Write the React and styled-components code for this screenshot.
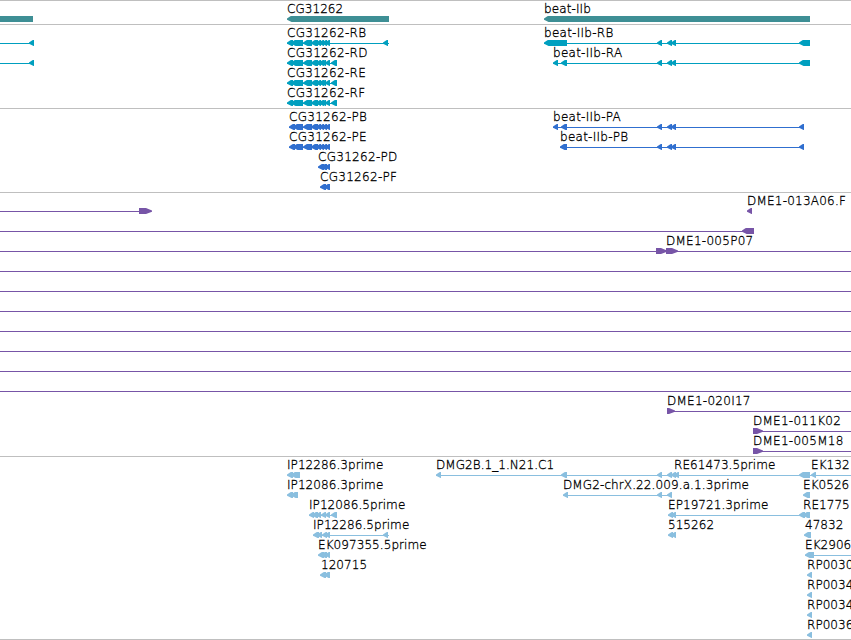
import styled, { createGlobalStyle } from "styled-components";

const GlobalStyle = createGlobalStyle`
  body {
    margin: 0;
    background: #fff;
    overflow: hidden;
  }
`;

const Browser = styled.main`
  width: 851px;
  height: 640px;
  overflow: hidden;
  border-bottom: 1px solid #bfbfbf;
  box-sizing: border-box;
`;

const Track = styled.section`
  padding: 1px 0 ${({ $last }) => ($last ? "1px" : "2px")};
  border-top: 1px solid #bfbfbf;
  color: ${({ $color }) => $color};
`;

const Row = styled.div`
  display: flex;
  flex-direction: column;
  height: 20px;
`;

const Labels = styled.div`
  position: relative;
  height: 14px;
`;

/* labels sit at the sequence position of their feature */
const Label = styled.span`
  position: absolute;
  left: ${({ $x }) => $x}px;
  top: 0;
  color: #000;
  font: 200 12px/14px "DejaVu Sans", sans-serif;
  letter-spacing: ${({ $spacing }) => $spacing}px;
  -webkit-text-stroke: 0.3px #000;
  white-space: nowrap;
`;

const Glyphs = styled.svg`
  display: block;
  width: 851px;
  height: 6px;
  fill: currentColor;
`;

const exonPoints = (start, end, dir) => {
  if (dir === ">") {
    return `${start},0 ${end - 6},0 ${end},2.4 ${end},3.8 ${end - 6},6 ${start},6`;
  }
  return `${end},0 ${start + 3.8},0 ${start},2.4 ${start},3.8 ${start + 4.6},6 ${end},6`;
};

// hyphenated names run a little wider than plain ones
const labelSpacing = (text) => {
  if (!text.includes("-")) return text.includes("prime") ? 0.07 : 0.05;
  return text.length > 8 ? 2.9 / text.length : 0.1;
};

const beatEnd = [[657, 662], [667, 672], [671, 676]];
const cgStart = [[287, 293], [291, 303], [303, 312]];
const cgMiddle = [[311, 318], [316, 321], [319, 324]];
const cgTail = [[322, 327], [325, 330]];
const rdExons = [...cgStart, ...cgMiddle, [321, 326], [325, 330], [331, 337]];
const pbExons = [[289, 295], [293, 303], [303, 312], ...cgMiddle, ...cgTail];
const pdExons = [[318, 324], [321, 327], [325, 330]];
const pfExons = [[320, 326], [324, 330]];

// row: labels [x, text], lines [start, end], exons [start, end, direction]
const tracks = [
  {
    name: "genes",
    color: "#3e8f95",
    rows: [
      {
        labels: [[287, "CG31262"], [544, "beat-IIb"]],
        exons: [[-10, 33], [287, 389], [544, 810]],
      },
    ],
  },
  {
    name: "transcripts",
    color: "#009fbf",
    rows: [
      {
        labels: [[287, "CG31262-RB"], [544, "beat-IIb-RB"]],
        lines: [[0, 34], [287, 389], [544, 810]],
        exons: [[29, 34], ...cgStart, ...cgMiddle, ...cgTail, [383, 388], [544, 567], ...beatEnd, [799, 810]],
      },
      {
        labels: [[287, "CG31262-RD"], [553, "beat-IIb-RA"]],
        lines: [[0, 34], [287, 337], [553, 810]],
        exons: [[29, 34], ...rdExons, [553, 558], [561, 567], ...beatEnd, [799, 810]],
      },
      { labels: [[287, "CG31262-RE"]], lines: [[287, 337]], exons: rdExons },
      { labels: [[287, "CG31262-RF"]], lines: [[287, 337]], exons: rdExons },
    ],
  },
  {
    name: "proteins",
    color: "#306fcf",
    rows: [
      {
        labels: [[289, "CG31262-PB"], [553, "beat-IIb-PA"]],
        lines: [[289, 330], [553, 804]],
        exons: [...pbExons, [553, 558], [561, 567], ...beatEnd, [799, 804]],
      },
      {
        labels: [[289, "CG31262-PE"], [560, "beat-IIb-PB"]],
        lines: [[289, 330], [560, 804]],
        exons: [...pbExons, [560, 567], ...beatEnd, [799, 804]],
      },
      { labels: [[318, "CG31262-PD"]], exons: pdExons },
      { labels: [[320, "CG31262-PF"]], exons: pfExons },
    ],
  },
  {
    name: "insertions",
    color: "#7755a7",
    rows: [
      {
        labels: [[747, "DME1-013A06.F"]],
        lines: [[0, 151]],
        exons: [[139, 152, ">"], [747, 752]],
      },
      { lines: [[0, 754]], exons: [[742, 754]] },
      {
        labels: [[666, "DME1-005P07"]],
        lines: [[0, 851]],
        exons: [[656, 667, ">"], [666, 678, ">"]],
      },
      ...Array.from({ length: 7 }, () => ({ lines: [[0, 851]] })),
      { labels: [[667, "DME1-020I17"]], lines: [[667, 851]], exons: [[667, 675, ">"]] },
      { labels: [[753, "DME1-011K02"]], lines: [[753, 851]], exons: [[753, 763, ">"]] },
      { labels: [[753, "DME1-005M18"]], lines: [[753, 851]], exons: [[753, 763, ">"]] },
    ],
  },
  {
    name: "ests",
    color: "#8abfdf",
    rows: [
      {
        labels: [[287, "IP12286.3prime"], [436, "DMG2B.1_1.N21.C1"], [674, "RE61473.5prime"], [811, "EK132"]],
        lines: [[436, 851]],
        exons: [[287, 293], [291, 300], [436, 441], [561, 567], ...beatEnd, [674, 679], [799, 810], [811, 816]],
      },
      {
        labels: [[287, "IP12086.3prime"], [563, "DMG2-chrX.22.009.a.1.3prime"], [803, "EK0526"]],
        lines: [[563, 672]],
        exons: [[287, 293], [291, 298], [563, 568], [657, 662], [667, 672], [803, 810]],
      },
      {
        labels: [[309, "IP12086.5prime"], [668, "EP19721.3prime"], [803, "RE1775"]],
        lines: [[309, 337], [668, 810]],
        exons: [[309, 314], [312, 318], [316, 321], [321, 326], [325, 330], [331, 337], [668, 673], [671, 676], [799, 805], [803, 810]],
      },
      {
        labels: [[313, "IP12286.5prime"], [668, "515262"], [805, "47832"]],
        lines: [[313, 389]],
        exons: [[313, 319], [317, 322], ...cgTail, [383, 388], [668, 673], [671, 676], [804, 811]],
      },
      {
        labels: [[318, "EK097355.5prime"], [805, "EK2906"]],
        lines: [[805, 851]],
        exons: [...pdExons, [805, 814]],
      },
      { labels: [[321, "120715"], [807, "RP0030"]], exons: [...pfExons, [807, 812]] },
      { labels: [[807, "RP0034"]], exons: [[807, 812]] },
      { labels: [[807, "RP0034"]], exons: [[807, 812]] },
      { labels: [[807, "RP0036"]], exons: [[807, 812]] },
    ],
  },
];

const FeatureRow = ({ labels = [], lines = [], exons = [] }) => (
  <Row>
    <Labels>
      {labels.map(([x, text]) => (
        <Label key={x} $x={x} $spacing={labelSpacing(text)}>
          {text}
        </Label>
      ))}
    </Labels>
    <Glyphs viewBox="0 0 851 6">
      {lines.map(([start, end]) => (
        <rect key={start} x={start} y="3" width={end - start} height="1" />
      ))}
      {exons.map(([start, end, dir]) => (
        <polygon key={start} points={exonPoints(start, end, dir)} />
      ))}
    </Glyphs>
  </Row>
);

const App = () => {
  return (
    <>
      <GlobalStyle />
      <Browser>
        {tracks.map(({ name, color, rows }, index) => (
          <Track key={name} $color={color} $last={index === tracks.length - 1}>
            {rows.map((row, i) => (
              <FeatureRow key={i} {...row} />
            ))}
          </Track>
        ))}
      </Browser>
    </>
  );
};

export default App;
